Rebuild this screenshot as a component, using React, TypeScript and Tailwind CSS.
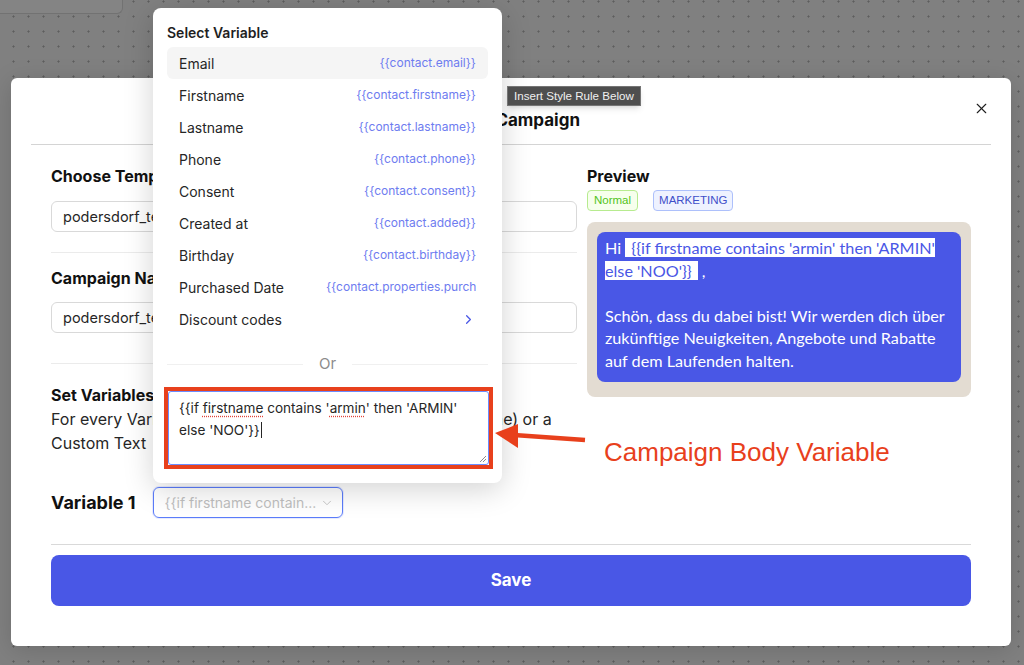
import React from "react";
import { X, ChevronDown, ChevronRight } from "lucide-react";

const variables: { label: string; value: string }[] = [
  { label: "Email", value: "{{contact.email}}" },
  { label: "Firstname", value: "{{contact.firstname}}" },
  { label: "Lastname", value: "{{contact.lastname}}" },
  { label: "Phone", value: "{{contact.phone}}" },
  { label: "Consent", value: "{{contact.consent}}" },
  { label: "Created at", value: "{{contact.added}}" },
  { label: "Birthday", value: "{{contact.birthday}}" },
  { label: "Purchased Date", value: "{{contact.properties.purchased_date}}" },
];

// Variable picker popover, anchored above the "Variable 1" select
const VariablePopover: React.FC = () => (
  <div className="absolute left-[153px] top-[8px] w-[349px] rounded-lg bg-white px-[14px] pt-[16px] pb-[14px] shadow-[0_6px_30px_rgba(0,0,0,0.18)]">
    <div className="text-[14px] font-semibold leading-[18px] text-[#1f1f1f]">Select Variable</div>
    <ul className="mt-[5px]">
      {variables.map((v, i) => (
        <li
          key={v.label}
          className={`flex h-[32px] items-center rounded-md px-[12px] ${i === 0 ? "bg-[#f5f5f5]" : ""}`}
        >
          <span className="whitespace-nowrap text-[14px] text-[#262626]">{v.label}</span>
          <span className="ml-auto max-w-[150px] overflow-hidden whitespace-nowrap text-[12px] text-[#6e7cf0]">
            {v.value}
          </span>
        </li>
      ))}
      <li className="flex h-[32px] items-center px-[12px]">
        <span className="text-[14px] text-[#262626]">Discount codes</span>
        <ChevronRight className="ml-auto text-[#4957e6]" size={15} strokeWidth={2} />
      </li>
    </ul>

    {/* Or divider */}
    <div className="mt-[18px] flex items-center gap-[16px]">
      <div className="h-px flex-1 bg-[#f0f0f0]" />
      <span className="text-[15px] text-[#8c8c8c]">Or</span>
      <div className="h-px flex-1 bg-[#f0f0f0]" />
    </div>

    {/* annotated custom text box */}
    <div className="-ml-[3px] mt-[11px] w-[329px] border-4 border-[#e8401c]">
      <div className="relative h-[74px] rounded-[3px] border border-[#6b8cff] bg-white px-[10px] py-[5px] text-[13.6px] leading-[22px] text-[#262626]">
        {"{{if "}
        <span className="underline decoration-[#e0443a] decoration-dotted underline-offset-[3px]">firstname</span>
        {" contains '"}
        <span className="underline decoration-[#e0443a] decoration-dotted underline-offset-[3px]">armin</span>
        {"' then 'ARMIN' else 'NOO'}}"}
        <span className="ml-px inline-block h-[16px] w-px translate-y-[3px] bg-[#262626]" />
        <svg className="absolute bottom-[1px] right-[1px]" width="8" height="8" viewBox="0 0 8 8">
          <path d="M7 1 L1 7 M7 4 L4 7" stroke="#8c8c8c" strokeWidth="1" />
        </svg>
      </div>
    </div>
  </div>
);

const PreviewBubble: React.FC = () => (
  <div className="mt-[11px] h-[175px] rounded-lg bg-[#e3dcd2] p-[10px]">
    <div className="rounded-lg bg-[#4957e6] px-[8px] pt-[5px] pb-[10px] font-['Lato',sans-serif] text-[16.2px] leading-[22.5px] text-white">
      <p>
        Hi{" "}
        <span className="bg-white px-[6px] text-[#4957e6]">
          {"{{if firstname contains 'armin' then 'ARMIN' else 'NOO'}}"}
        </span>{" "}
        ,
      </p>
      <p className="mt-[22.5px]">
        Schön, dass du dabei bist! Wir werden dich über zukünftige Neuigkeiten, Angebote und Rabatte auf dem
        Laufenden halten.
      </p>
    </div>
  </div>
);

export default function App() {
  return (
    <div className="relative h-[665px] w-[1024px] overflow-hidden bg-[#808080] bg-[radial-gradient(circle,#5e5e5e_0.9px,transparent_1.2px)] bg-[length:15px_15px] bg-[position:6px_9px] font-['Inter',sans-serif]">
      {/* page card peeking out behind the overlay */}
      <div className="absolute left-0 top-0 h-[14px] w-[123px] rounded-br-md border-b border-r border-[#727272] bg-[#848484]" />

      {/* modal */}
      <div className="pl-[11px] pt-[78px]">
        <div className="w-[1000px] rounded-md bg-white pb-[40px] shadow-[0_4px_24px_rgba(0,0,0,0.15)]">
          {/* header */}
          <div className="relative mx-[20px] flex h-[67px] items-end justify-center border-b border-[#d4d4d4] pb-[12px]">
            <h2 className="mr-[6px] text-[17px] font-bold leading-[24px] text-[#111]">Create Campaign</h2>
            <button className="absolute right-[1px] top-[22px] text-[#1f1f1f]">
              <X size={17} strokeWidth={1.6} />
            </button>
          </div>

          <div className="px-[40px] pt-[19px]">
            <div className="flex gap-[10px]">
              {/* left column */}
              <div className="w-[526px]">
                <div className="text-[16px] font-bold leading-[24px] text-[#111]">Choose Template</div>
                <div className="mt-[13px] flex h-[31px] items-center rounded-md border border-[#d9d9d9] px-[11px] text-[14.5px] text-[#262626]">
                  podersdorf_test_template
                </div>
                <div className="mt-[20px] h-px bg-[#ebebeb]" />

                <div className="mt-[13px] text-[16px] font-bold leading-[24px] text-[#111]">Campaign Name</div>
                <div className="mt-[12px] flex h-[31px] items-center rounded-md border border-[#d9d9d9] px-[11px] text-[14.5px] text-[#262626]">
                  podersdorf_test_campaign
                </div>
                <div className="mt-[30px] h-px bg-[#ebebeb]" />

                <div className="mt-[19px] text-[16px] font-bold leading-[24px] text-[#111]">Set Variables</div>
                <p className="text-[16px] leading-[24px] text-[#262626]">
                  For every Variable choose a Contact Attribute (e.g. Firstname) or a
                  <br />
                  Custom Text
                </p>

                <div className="mt-[32px] flex items-center gap-[17px]">
                  <span className="text-[18px] font-bold leading-[24px] text-[#111]">Variable 1</span>
                  <div className="flex h-[31px] w-[190px] items-center rounded-md border border-[#5b7cfa] pl-[11px] pr-[8px] shadow-[0_0_0_1px_rgba(91,124,250,0.15)]">
                    <span className="truncate text-[14px] text-[#bfbfbf]">{"{{if firstname contain..."}</span>
                    <ChevronDown className="ml-auto shrink-0 text-[#bfbfbf]" size={14} strokeWidth={1.5} />
                  </div>
                </div>
              </div>

              {/* right column */}
              <div className="flex-1">
                <div className="text-[16px] font-bold leading-[24px] text-[#111]">Preview</div>
                <div className="mt-[2px] flex gap-[15px] font-['Liberation_Sans',sans-serif]">
                  <span className="flex h-[21px] items-center rounded-[4px] border border-[#b7eb8f] bg-[#f6ffed] px-[6px] text-[11.5px] text-[#52c41a]">
                    Normal
                  </span>
                  <span className="flex h-[21px] items-center rounded-[4px] border border-[#adc0fb] bg-[#eef2ff] px-[5px] text-[11.5px] text-[#3f4fc9]">
                    MARKETING
                  </span>
                </div>
                <PreviewBubble />
              </div>
            </div>

            <div className="mt-[26px] h-px bg-[#d9d9d9]" />
            <button className="mt-[10px] flex h-[51px] w-full items-center justify-center rounded-lg bg-[#4957e6] text-[17px] font-bold text-white">
              Save
            </button>
          </div>
        </div>
      </div>

      <VariablePopover />

      {/* devtools tooltip */}
      <div className="absolute left-[507px] top-[86px] border border-[#757575] bg-[#4e4e4e] px-[6px] font-['Liberation_Sans',sans-serif] text-[11.6px] leading-[18px] text-[#f0f0f0] shadow-md">
        Insert Style Rule Below
      </div>

      {/* annotation arrow + caption */}
      <svg className="absolute left-[490px] top-[420px]" width="100" height="32" viewBox="0 0 100 32">
        <line x1="24" y1="15" x2="95" y2="20" stroke="#e8401c" strokeWidth="4.5" />
        <polygon points="5,13 28,4 28,28" fill="#e8401c" />
      </svg>
      <div className="absolute left-[604px] top-[436px] font-['Liberation_Sans',sans-serif] text-[26px] leading-[32px] text-[#e8401c]">
        Campaign Body Variable
      </div>
    </div>
  );
}
